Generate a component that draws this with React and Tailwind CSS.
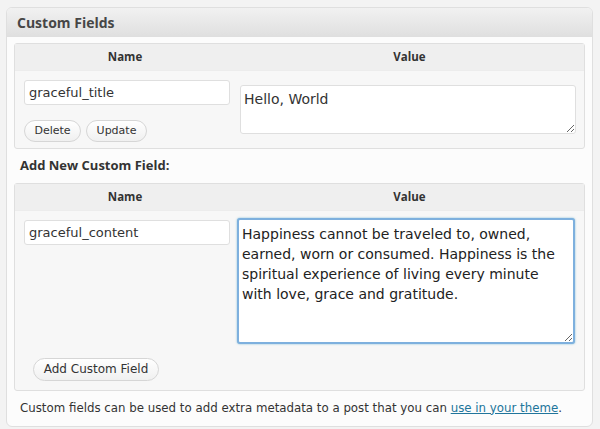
import React from 'react';

const font = { fontFamily: '"DejaVu Sans", "Liberation Sans", sans-serif' };
const boldFont = { fontFamily: '"Open Sans", "DejaVu Sans", sans-serif' };

function Btn({ children, className = '' }) {
  return (
    <button
      className={`h-[22px] rounded-full border border-[#d6d6d6] bg-gradient-to-b from-white to-[#f0f0f0] text-[#333] ${className}`}
    >
      {children}
    </button>
  );
}

function FieldTable({ value, children }) {
  return (
    <div className="mx-[7px] rounded-[3px] border border-[#dfdfdf] bg-[#f7f7f7]">
      <div
        className="flex h-[27px] items-center border-b border-[#ececec] bg-[#efefef] text-[11.5px] font-bold text-[#333]"
        style={boldFont}
      >
        <div className="w-[220px] text-center">Name</div>
        <div className="flex-1 text-center">Value</div>
      </div>
      <div className="flex">
        <div className="w-[220px] pl-[9px] pr-[5px]">{children}</div>
        <div className="flex-1 pr-[9px]">{value}</div>
      </div>
    </div>
  );
}

export default function App() {
  return (
    <div className="h-[429px] w-[600px] bg-[#f3f3f3] pl-[6px] pt-[7px]" style={font}>
      <div className="w-[587px] overflow-hidden rounded-[6px] border border-[#dfdfdf] bg-[#fcfcfc]">
        <div
          className="flex h-[29px] items-center border-b border-[#dfdfdf] bg-gradient-to-b from-[#f1f1f1] to-[#e0e0e0] pl-[10px] text-[14px] font-bold text-[#464646]"
          style={boldFont}
        >
          Custom Fields
        </div>
        <div className="pt-[6px]">
          <FieldTable
            value={
              <textarea
                defaultValue="Hello, World"
                className="mt-[14px] ml-[5px] block h-[49px] w-[336px] resize-y rounded-[3px] border border-[#dfdfdf] bg-white px-[3px] py-[3px] text-[14px] leading-[20px] text-[#333] outline-none"
              />
            }
          >
            <input
              defaultValue="graceful_title"
              className="mt-[9px] block h-[25px] w-[206px] rounded-[3px] border border-[#dfdfdf] bg-white px-[4px] text-[13px] text-[#333] outline-none"
            />
            <div className="mt-[15px] mb-[6px] flex gap-[5px]">
              <Btn className="w-[57px] text-[11px]">Delete</Btn>
              <Btn className="w-[61px] text-[11px]">Update</Btn>
            </div>
          </FieldTable>

          <div
            className="flex h-[34px] items-center pl-[13px] text-[13px] font-bold text-[#333]"
            style={boldFont}
          >
            Add New Custom Field:
          </div>

          <FieldTable
            value={
              <textarea
                defaultValue="Happiness cannot be traveled to, owned, earned, worn or consumed. Happiness is the spiritual experience of living every minute with love, grace and gratitude."
                className="mt-[7px] ml-[2px] block h-[126px] w-[338px] resize-y rounded-[3px] border-2 border-[#7eb0de] bg-white px-[3px] pt-[4px] pb-[3px] text-[14px] leading-[20px] text-[#222] shadow-[0_0_2px_rgba(30,140,190,0.6)] outline-none"
              />
            }
          >
            <input
              defaultValue="graceful_content"
              className="mt-[9px] block h-[25px] w-[206px] rounded-[3px] border border-[#dfdfdf] bg-white px-[4px] text-[13px] text-[#333] outline-none"
            />
            <div className="mt-[111px] mb-[9px] pl-[9px]">
              <Btn className="h-[23px] w-[126px] text-[12px]">Add Custom Field</Btn>
            </div>
          </FieldTable>

          <p className="pl-[13px] pt-[9px] pb-[9px] text-[11.8px] text-[#333]">
            Custom fields can be used to add extra metadata to a post that you can{' '}
            <a href="#" className="text-[#21759b] underline">
              use in your theme
            </a>
            .
          </p>
        </div>
      </div>
    </div>
  );
}
